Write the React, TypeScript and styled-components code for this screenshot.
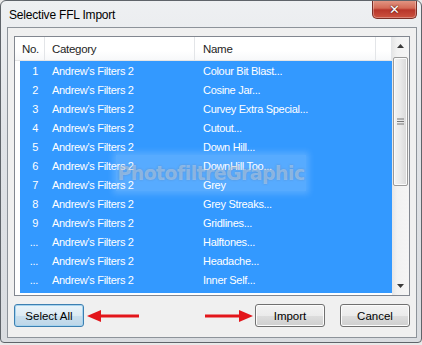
import React from 'react';
import styled, { createGlobalStyle } from 'styled-components';

const GlobalStyle = createGlobalStyle`
  * { box-sizing: border-box; }
  body {
    margin: 0;
    background: #e9e9e9;
    font-family: "Liberation Sans", Arial, sans-serif;
  }
`;

const rows: Array<[string, string]> = [
	['1', 'Colour Bit Blast...'],
	['2', 'Cosine Jar...'],
	['3', 'Curvey Extra Special...'],
	['4', 'Cutout...'],
	['5', 'Down Hill...'],
	['6', 'DownHill Too...'],
	['7', 'Grey'],
	['8', 'Grey Streaks...'],
	['9', 'Gridlines...'],
	['...', 'Halftones...'],
	['...', 'Headache...'],
	['...', 'Inner Self...']
];

const Window = styled.div`
	position: relative;
	width: 422px;
	height: 343px;
	border: 1px solid #5f646a;
	border-radius: 6px 6px 4px 4px;
	background: linear-gradient(to bottom, #eef0f2 0%, #e0e3e7 40%, #d9dce0 100%);
	display: flex;
	flex-direction: column;
	padding: 0 4px 4px 6px;
	overflow: hidden;
`;

const TitleBar = styled.div`
	height: 26px;
	display: flex;
	align-items: flex-start;
	justify-content: space-between;
`;

const Title = styled.span`
	margin: 7px 0 0 2px;
	font-size: 12px;
	letter-spacing: -0.2px;
	color: #000;
`;

const CloseButton = styled.div`
	width: 45px;
	height: 19px;
	margin-top: -1px;
	border: 1px solid #7a2f27;
	border-top: none;
	border-radius: 0 0 5px 5px;
	background: linear-gradient(to bottom, #e39a88 0%, #d46a56 45%, #b8352a 55%, #cc5340 100%);
	box-shadow: inset 0 0 0 1px rgba(255, 255, 255, 0.3);
	display: flex;
	align-items: center;
	justify-content: center;
	color: #fff;
	font-family: "DejaVu Sans", sans-serif;
	font-weight: bold;
	font-size: 13px;
	text-shadow: 0 0 2px #5a1a12, 0 0 1px #5a1a12;
`;

const Client = styled.div`
	flex: 1;
	border: 1px solid #8d939a;
	background: #f0f0f0;
	padding: 8px 6px 9px 6px;
	display: flex;
	flex-direction: column;
`;

const ListView = styled.div`
	position: relative;
	height: 260px;
	border: 1px solid #828790;
	background: #fff;
	display: flex;
`;

const ListBody = styled.div`
	flex: 1;
	display: flex;
	flex-direction: column;
	overflow: hidden;
`;

const Header = styled.div`
	height: 24px;
	display: grid;
	grid-template-columns: 30px 150px 181px 1fr;
	border-bottom: 1px solid #e5e5e5;
	background: linear-gradient(to bottom, #ffffff 0%, #ffffff 60%, #f7f8fa 100%);
`;

const HeaderCell = styled.div<{ $pad?: number }>`
	display: flex;
	align-items: center;
	padding-left: ${(p) => (p.$pad ?? 7)}px;
	border-right: 1px solid #e3e5e8;
	font-size: 11.5px;
	letter-spacing: -0.3px;
	color: #1e1e1e;
`;

const RowArea = styled.div`
	height: 232px;
	margin-left: 5px;
	background: #3399ff;
	overflow: hidden;
`;

const Row = styled.div`
	height: 19px;
	display: grid;
	grid-template-columns: 25px 150px 1fr;
	align-items: center;
	color: #fff;
	font-size: 11px;
	letter-spacing: -0.3px;
`;

const Cell = styled.div<{ $align?: string; $pad?: number }>`
	text-align: ${(p) => p.$align || 'left'};
	padding: ${(p) => (p.$align === 'right' ? `0 ${p.$pad}px 0 0` : `0 0 0 ${p.$pad}px`)};
	white-space: nowrap;
`;

const ScrollBar = styled.div`
	width: 17px;
	display: flex;
	flex-direction: column;
	background: linear-gradient(to right, #e6e6e6 0%, #f2f2f2 30%, #f5f5f5 100%);
`;

const ScrollArrow = styled.div`
	height: 18px;
	display: flex;
	align-items: center;
	justify-content: center;
`;

const ScrollTrack = styled.div`
	flex: 1;
	padding: 2px 1px 0 1px;
`;

const Thumb = styled.div`
	height: 129px;
	border: 1px solid #9a9a9a;
	border-radius: 2px;
	background: linear-gradient(to right, #f4f4f4 0%, #e9e9e9 50%, #d8d8d8 100%);
	box-shadow: inset 0 0 0 1px #fbfbfb;
	display: flex;
	align-items: center;
	justify-content: center;
`;

const Watermark = styled.div`
	position: absolute;
	left: 101px;
	top: 118px;
	width: 190px;
	height: 36px;
	background: rgba(255, 255, 255, 0.18);
	box-shadow: 0 0 6px 3px rgba(255, 255, 255, 0.18);
	display: flex;
	align-items: center;
	justify-content: center;
	font-family: "DejaVu Sans", sans-serif;
	font-weight: bold;
	font-size: 19px;
	letter-spacing: -0.6px;
	color: rgba(255, 255, 255, 0.32);
	text-shadow: 0 0 2px rgba(90, 110, 140, 0.45);
	pointer-events: none;
`;

const ButtonRow = styled.div`
	margin-top: 8px;
	display: flex;
	align-items: center;
`;

const Button = styled.div<{ $focused?: boolean }>`
	width: 70px;
	height: 23px;
	border: 1px solid ${(p) => (p.$focused ? '#3c7fb1' : '#707070')};
	border-radius: 3px;
	background: ${(p) =>
		p.$focused
			? 'linear-gradient(to bottom, #eaf4fa 0%, #dceaf3 50%, #c9dfee 51%, #bed6e8 100%)'
			: 'linear-gradient(to bottom, #f3f3f3 0%, #ebebeb 50%, #dddddd 51%, #cfcfcf 100%)'};
	box-shadow: inset 0 0 0 1px ${(p) => (p.$focused ? '#a6d3ee' : '#fcfcfc')};
	display: flex;
	align-items: center;
	justify-content: center;
	font-size: 11.5px;
	color: #000;
`;

const ArrowSlot = styled.span<{ $left?: number; $right?: number }>`
	display: flex;
	margin-left: ${(p) => p.$left || 0}px;
	margin-right: ${(p) => p.$right || 0}px;
`;

const Spacer = styled.div`
	flex: 1;
`;

function RedArrow({ dir, width }: { dir: 'left' | 'right'; width: number }) {
	const head = dir === 'left' ? `0,7 14,1 14,13` : `${width},7 ${width - 14},1 ${width - 14},13`;
	const x1 = dir === 'left' ? 12 : 0;
	const x2 = dir === 'left' ? width : width - 12;
	return (
		<svg width={width} height={14} viewBox={`0 0 ${width} 14`}>
			<line x1={x1} y1={7} x2={x2} y2={7} stroke="#e3161b" strokeWidth={3} />
			<polygon points={head} fill="#e3161b" />
		</svg>
	);
}

export default function App() {
	return (
		<>
			<GlobalStyle />
			<Window>
				<TitleBar>
					<Title>Selective FFL Import</Title>
					<CloseButton>✕</CloseButton>
				</TitleBar>
				<Client>
					<ListView>
						<ListBody>
							<Header>
								<HeaderCell>No.</HeaderCell>
								<HeaderCell>Category</HeaderCell>
								<HeaderCell $pad={8}>Name</HeaderCell>
								<HeaderCell $pad={0} />
							</Header>
							<RowArea>
								{rows.map(([no, name], index) => (
									<Row key={index}>
										<Cell $align="right" $pad={7}>{no}</Cell>
										<Cell $pad={7}>Andrew's Filters 2</Cell>
										<Cell $pad={8}>{name}</Cell>
									</Row>
								))}
							</RowArea>
						</ListBody>
						<ScrollBar>
							<ScrollArrow>
								<svg width="7" height="4" viewBox="0 0 7 4"><polygon points="0,4 3.5,0 7,4" fill="#3a3a3a" /></svg>
							</ScrollArrow>
							<ScrollTrack>
								<Thumb>
									<svg width="7" height="7" viewBox="0 0 7 7">
										<line x1="0" y1="1" x2="7" y2="1" stroke="#777" />
										<line x1="0" y1="3.5" x2="7" y2="3.5" stroke="#777" />
										<line x1="0" y1="6" x2="7" y2="6" stroke="#777" />
									</svg>
								</Thumb>
							</ScrollTrack>
							<ScrollArrow>
								<svg width="7" height="4" viewBox="0 0 7 4"><polygon points="0,0 3.5,4 7,0" fill="#3a3a3a" /></svg>
							</ScrollArrow>
						</ScrollBar>
						<Watermark>PhotofiltreGraphic</Watermark>
					</ListView>
					<ButtonRow>
						<Button $focused>Select All</Button>
						<ArrowSlot $left={3}>
							<RedArrow dir="left" width={52} />
						</ArrowSlot>
						<Spacer />
						<ArrowSlot $right={2}>
							<RedArrow dir="right" width={48} />
						</ArrowSlot>
						<Button>Import</Button>
						<Button style={{ marginLeft: 15 }}>Cancel</Button>
					</ButtonRow>
				</Client>
			</Window>
		</>
	);
}
